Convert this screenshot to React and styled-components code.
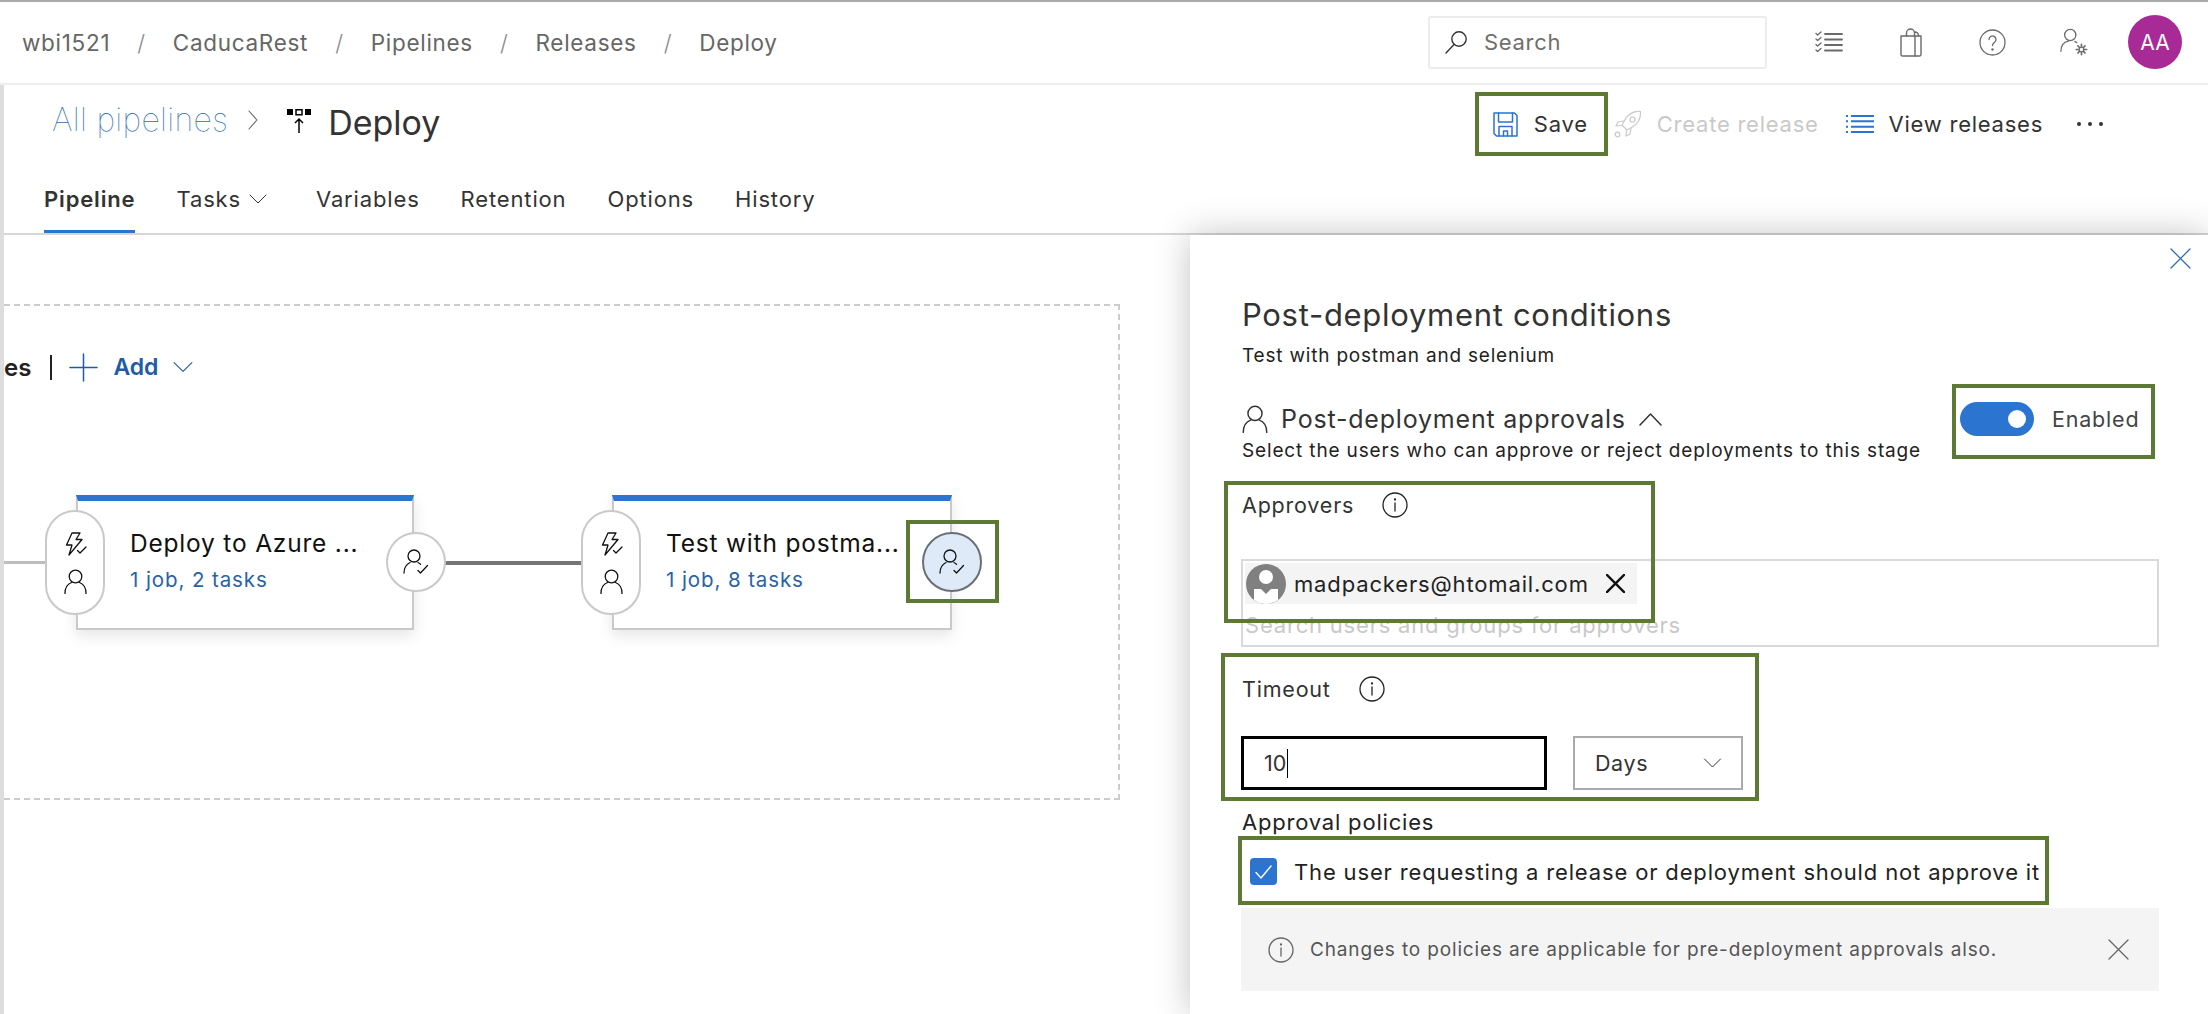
import React from 'react'
import styled, { createGlobalStyle } from 'styled-components'

const GlobalStyle = createGlobalStyle`
  html, body {
    margin: 0;
    padding: 0;
    background: #fff;
    font-family: Inter, "Noto Sans", "Liberation Sans", sans-serif;
  }
  * { box-sizing: border-box; }
`

const green = '#5c7a34'
const blue = '#2b74cf'

const Page = styled.div`
  width: 2208px;
  height: 1014px;
  overflow: hidden;
  background: #fff;
  border-top: 2px solid #a9a9a9;
`

const TopBar = styled.header`
  height: 83px;
  display: flex;
  align-items: center;
  padding: 0 26px 1px 22px;
  border-bottom: 2px solid #eeeeee;
`

const Crumbs = styled.nav`
  display: flex;
  align-items: center;
  gap: 27px;
  font-size: 22.5px;
  letter-spacing: 0.7px;
  color: #666;
`

const Slash = styled.span`
  color: #8a8a8a;
  font-weight: 300;
`

const SearchBox = styled.div`
  width: 339px;
  height: 53px;
  margin-left: auto;
  margin-right: 48px;
  display: flex;
  align-items: center;
  gap: 15px;
  padding-left: 13px;
  border: 2px solid #ececec;
  border-radius: 3px;
  color: #6f6f6f;
  font-size: 22px;
  letter-spacing: 0.7px;
`

const TopIcons = styled.div`
  display: flex;
  align-items: center;
  gap: 53.5px;
`

const TopIcon = styled.span`
  width: 28px;
  height: 28px;
  display: flex;
  align-items: center;
  justify-content: center;
  color: #6a6a6a;
`

const Avatar = styled.div`
  width: 54px;
  height: 54px;
  margin-left: 40.5px;
  border-radius: 50%;
  background: #a82a96;
  color: #fff;
  font-size: 21px;
  display: flex;
  align-items: center;
  justify-content: center;
`

const Body = styled.main`
  height: 929px;
  border-left: 4px solid #dddddd;
`

const TitleRow = styled.div`
  height: 84px;
  display: flex;
  justify-content: space-between;
  padding: 7px 105px 0 48px;
`

const TitleLeft = styled.div`
  display: flex;
  align-items: center;
  height: 56px;
`

const AllPipelines = styled.a`
  margin-bottom: 2px;
  font-size: 32px;
  font-weight: 100;
  letter-spacing: 0.3px;
  color: #2b6cb8;
`

const TitleChevron = styled.span`
  display: flex;
  margin: 0 28px 0 19px;
  color: #666;
`

const DeployMark = styled.span`
  display: flex;
  margin-top: 2px;
`

const DeployTitle = styled.h1`
  margin: 4px 0 0 17px;
  font-size: 34px;
  font-weight: 400;
  color: #333;
`

const Actions = styled.div`
  display: flex;
  align-items: flex-start;
`

const Action = styled.button`
  height: 64px;
  display: flex;
  align-items: center;
  gap: ${({ $gap }) => $gap || 15}px;
  padding: 0;
  margin-left: ${({ $left }) => $left || 0}px;
  background: none;
  border: none;
  font: inherit;
  font-size: 22px;
  letter-spacing: 0.75px;
  color: ${({ $disabled }) => ($disabled ? '#c9c9c9' : '#333')};
`

const SaveAction = styled(Action)`
  width: 133px;
  padding-left: 14px;
  border: 4px solid ${green};
`

const Dots = styled.span`
  display: flex;
  gap: 7px;
  margin-left: 34px;
  height: 64px;
  align-items: center;
`

const Dot = styled.i`
  width: 4px;
  height: 4px;
  border-radius: 50%;
  background: #333;
`

const TabBar = styled.div`
  height: 66px;
  display: flex;
  align-items: flex-end;
  gap: 41px;
  padding-left: 40px;
  border-bottom: 2px solid #d6d6d6;
`

const Tab = styled.div`
  height: 53px;
  display: flex;
  align-items: center;
  gap: 8px;
  padding-bottom: 13px;
  font-size: 22px;
  letter-spacing: 0.85px;
  font-weight: ${({ $active }) => ($active ? 600 : 400)};
  color: #333;
  border-bottom: 3px solid ${({ $active }) => ($active ? blue : 'transparent')};
  margin-right: ${({ $extra }) => $extra || 0}px;
`

const Content = styled.div`
  display: flex;
  height: 779px;
`

const CanvasArea = styled.section`
  width: 1186px;
  flex: none;
`

const DashedBox = styled.div`
  width: 1116px;
  height: 496px;
  margin-top: 69px;
  border: 2px dashed #cccccc;
  border-left: none;
`

const StageToolbar = styled.div`
  display: flex;
  align-items: center;
  height: 40px;
  margin-top: 41px;
  color: #1f5ca5;
`

const StagesLabel = styled.span`
  font-size: 24px;
  font-weight: 600;
  color: #222;
`

const Divider = styled.span`
  width: 2px;
  height: 25px;
  margin: 0 17px 0 19px;
  background: #222;
`

const AddLabel = styled.span`
  margin: 0 15px;
  font-size: 23px;
  font-weight: 600;
  color: #1f5ca5;
`

const StageRow = styled.div`
  display: flex;
  align-items: center;
  margin-top: 108px;
`

const Connector = styled.div`
  width: ${({ $width }) => $width}px;
  height: ${({ $light }) => ($light ? 3 : 4)}px;
  margin: ${({ $light }) => ($light ? '0 31px 0 0' : '0 31px')};
  background: ${({ $light }) => ($light ? '#bdbdbd' : '#757575')};
`

const StageCard = styled.div`
  position: relative;
  width: ${({ $width }) => $width}px;
  height: 135px;
  padding: 27px 0 0 52px;
  background: #fff;
  border: 2px solid #c9c9c9;
  border-top: 6px solid ${blue};
  box-shadow: 0 6px 14px rgba(0, 0, 0, 0.1);
`

const StageName = styled.div`
  font-size: 24.5px;
  letter-spacing: 0.8px;
  line-height: 30px;
  color: #111;
  white-space: nowrap;
`

const StageMeta = styled.div`
  margin-top: 9px;
  font-size: 20.5px;
  letter-spacing: 0.9px;
  line-height: 26px;
  color: #2a62a8;
`

const LeftPill = styled.div`
  position: absolute;
  left: -33px;
  top: 9px;
  width: 60px;
  height: 105px;
  border-radius: 30px;
  background: #fff;
  border: 2px solid #c9c9c9;
  display: flex;
  flex-direction: column;
  align-items: center;
  justify-content: center;
  gap: 13px;
  color: #111;
`

const RightCircle = styled.div`
  position: absolute;
  left: 308px;
  top: 31px;
  width: 60px;
  height: 60px;
  border-radius: 50%;
  background: ${({ $selected }) => ($selected ? '#deeaf7' : '#fff')};
  border: 2px solid ${({ $selected }) => ($selected ? '#6a6f76' : '#c9c9c9')};
  display: flex;
  align-items: center;
  justify-content: center;
  color: #111;
`

const NodeMark = styled.div`
  position: absolute;
  left: 292px;
  top: 19px;
  width: 93px;
  height: 83px;
  border: 4px solid ${green};
`

const Panel = styled.aside`
  position: relative;
  z-index: 1;
  flex: 1;
  height: 779px;
  padding: 60px 49px 0 51px;
  background: #fff;
  box-shadow: 0 0 34px rgba(0, 0, 0, 0.24);
`

const CloseButton = styled.span`
  position: absolute;
  top: 13px;
  right: 17px;
  display: flex;
  color: #2b6cb8;
`

const PanelTitle = styled.h2`
  margin: 0 0 0 1px;
  font-size: 31px;
  letter-spacing: 0.7px;
  line-height: 40px;
  font-weight: 400;
  color: #333;
`

const PanelSubtitle = styled.div`
  margin: 8px 0 0 1px;
  font-size: 19px;
  letter-spacing: 0.8px;
  line-height: 26px;
  color: #222;
`

const ApprovalsRow = styled.div`
  display: flex;
  justify-content: space-between;
  margin-top: 15px;
`

const ApprovalsText = styled.div`
  padding: 20px 0 0 1px;
`

const ApprovalsHeading = styled.div`
  display: flex;
  align-items: center;
  height: 30px;
  font-size: 25px;
  letter-spacing: 0.8px;
  color: #333;
`

const HeadingLabel = styled.span`
  margin: 0 13px;
`

const ApprovalsHint = styled.div`
  margin-top: 5px;
  font-size: 19px;
  letter-spacing: 0.85px;
  line-height: 24px;
  color: #222;
`

const ToggleBox = styled.div`
  width: 203px;
  height: 75px;
  margin-right: 4px;
  display: flex;
  align-items: flex-start;
  gap: 18px;
  padding: 14px 0 0 4px;
  border: 4px solid ${green};
  font-size: 21.5px;
  letter-spacing: 0.8px;
  color: #444;
`

const ToggleTrack = styled.span`
  width: 74px;
  height: 34px;
  flex: none;
  padding-left: 48px;
  display: flex;
  align-items: center;
  border-radius: 17px;
  background: ${blue};
`

const ToggleKnob = styled.i`
  width: 18px;
  height: 18px;
  border-radius: 50%;
  background: #fff;
`

const ToggleText = styled.span`
  line-height: 34px;
`

const ApproversField = styled.div`
  position: relative;
  margin-top: 28px;
`

const FieldLabel = styled.label`
  display: flex;
  align-items: center;
  height: 28px;
  margin-left: 1px;
  gap: ${({ $gap }) => $gap}px;
  font-size: 21.5px;
  letter-spacing: 0.8px;
  color: #333;
`

const PickerBox = styled.div`
  height: 88px;
  margin-top: 40px;
  padding: 2px;
  border: 2px solid #d9d9d9;
`

const Chip = styled.div`
  width: 392px;
  height: 41px;
  display: flex;
  align-items: center;
  padding-left: 1px;
  background: #f4f4f4;
  font-size: 22px;
  letter-spacing: 0.85px;
  color: #222;
`

const ChipAvatar = styled.span`
  display: flex;
  margin-right: 8px;
`

const ChipRemove = styled.span`
  display: flex;
  margin-left: 17px;
  color: #111;
`

const Placeholder = styled.div`
  margin-top: 9px;
  font-size: 22px;
  letter-spacing: 0.8px;
  line-height: 24px;
  color: #c9c9c9;
`

const ApproversMark = styled.div`
  position: absolute;
  left: -17px;
  top: -10px;
  width: 431px;
  height: 142px;
  border: 4px solid ${green};
  pointer-events: none;
`

const TimeoutBox = styled.div`
  width: 538px;
  height: 148px;
  margin: 6px 0 0 -20px;
  padding: 18px 0 0 16px;
  border: 4px solid ${green};
`

const TimeoutControls = styled.div`
  display: flex;
  gap: 26px;
  margin-top: 33px;
`

const TimeoutInput = styled.div`
  width: 306px;
  height: 54px;
  display: flex;
  align-items: center;
  padding-left: 20px;
  border: 3px solid #000;
  font-size: 21.5px;
  color: #333;
`

const Caret = styled.i`
  width: 1px;
  height: 29px;
  margin-left: 1px;
  background: #000;
`

const UnitSelect = styled.div`
  width: 170px;
  height: 54px;
  display: flex;
  align-items: center;
  justify-content: space-between;
  padding: 0 19px 0 20px;
  border: 2px solid #aaaaaa;
  font-size: 21.5px;
  letter-spacing: 0.6px;
  color: #333;
`

const PoliciesLabel = styled.div`
  margin: 7px 0 0 1px;
  font-size: 22px;
  letter-spacing: 0.8px;
  line-height: 28px;
  color: #222;
`

const PolicyBox = styled.div`
  width: 811px;
  height: 69px;
  margin-left: -3px;
  display: flex;
  align-items: center;
  gap: 17px;
  padding: 2px 0 0 8px;
  border: 4px solid ${green};
  font-size: 22px;
  letter-spacing: 0.85px;
  color: #222;
  white-space: nowrap;
`

const Checkbox = styled.span`
  width: 27px;
  height: 27px;
  flex: none;
  display: flex;
  align-items: center;
  justify-content: center;
  border-radius: 4px;
  background: ${blue};
  color: #fff;
`

const InfoBar = styled.div`
  height: 83px;
  margin-top: 3px;
  display: flex;
  align-items: center;
  gap: 16px;
  padding: 0 30px 0 27px;
  background: #f4f4f4;
  font-size: 19px;
  letter-spacing: 0.85px;
  color: #555;
`

const InfoClose = styled.span`
  display: flex;
  margin-left: auto;
  color: #666;
`

const Svg = ({ w, h = w, vb = '0 0 24 24', sw = 1.3, children }) => (
  <svg width={w} height={h} viewBox={vb} fill="none" stroke="currentColor" strokeWidth={sw} strokeLinecap="round" strokeLinejoin="round">
    {children}
  </svg>
)

const SearchIcon = () => (
  <Svg w={26} sw={1.4} vb="0 0 26 26">
    <circle cx="16" cy="10" r="7.2" color="#333" />
    <path d="M11 15.5 3 24" color="#333" />
  </Svg>
)

const ChecklistIcon = () => (
  <Svg w={28} h={22} vb="0 0 28 22" sw={1.3}>
    <path d="M10 3h17M10 8.5h17M10 14h17M10 19.5h17" strokeWidth="1.8" />
    <path d="M1 2.5l1.6 1.6L6 1M1 8l1.6 1.6L6 6.5M1 13.5l1.6 1.6L6 12M1 19l1.6 1.6L6 17.5" />
  </Svg>
)

const BagIcon = () => (
  <Svg w={24} h={29} vb="0 0 24 29" sw={1.4}>
    <path d="M2 8h20v18.5a1.5 1.5 0 0 1-1.5 1.5h-17A1.5 1.5 0 0 1 2 26.5z" />
    <path d="M7.5 8V5a4 4 0 0 1 8 0v3M16 8v20M15.5 4a3.5 3.5 0 0 1 4 3.5V8" />
  </Svg>
)

const HelpIcon = () => (
  <Svg w={27} vb="0 0 27 27" sw={1.3}>
    <circle cx="13.5" cy="13.5" r="12.5" />
    <path d="M10 10.5a3.5 3.5 0 1 1 5.6 2.8c-1.3 1-2.1 1.7-2.1 3.2" />
    <circle cx="13.5" cy="20.5" r=".6" fill="currentColor" />
  </Svg>
)

const UserGearIcon = () => (
  <Svg w={30} vb="0 0 30 30" sw={1.4}>
    <circle cx="11" cy="7.5" r="6" />
    <path d="M1 25c0-6 3-10 8-11M16 14.5c.8.3 1.5.7 2 1.2" />
    <circle cx="23" cy="23" r="2.5" />
    <path d="M23 17.5v2M23 26.5v2M17.5 23h2M26.5 23h2M19.2 19.2l1.4 1.4M25.4 25.4l1.4 1.4M19.2 26.8l1.4-1.4M25.4 20.6l1.4-1.4" strokeWidth="1.8" />
  </Svg>
)

const ChevronRight = () => (
  <Svg w={12} h={22} vb="0 0 12 22" sw={1.1}>
    <path d="M2 2l8 9-8 9" />
  </Svg>
)

const ChevronDown = ({ w = 18, h = 10 }) => (
  <Svg w={w} h={h} vb="0 0 18 10" sw={1}>
    <path d="M1 1l8 8 8-8" />
  </Svg>
)

const ChevronUp = () => (
  <Svg w={23} h={13} vb="0 0 23 13" sw={1.5}>
    <path d="M1 12 11.5 1 22 12" />
  </Svg>
)

const DeployIcon = () => (
  <svg width="24" height="24" viewBox="0 0 24 24" fill="none" stroke="#000">
    <rect x="0" y="0" width="6" height="6" fill="#000" stroke="none" />
    <rect x="9" y="0.75" width="6" height="5" strokeWidth="1.5" />
    <rect x="18" y="0" width="6" height="6" fill="#000" stroke="none" />
    <path d="M12 24V10M8 14l4-4 4 4" strokeWidth="1.5" />
  </svg>
)

const SaveIcon = () => (
  <Svg w={25} vb="0 0 25 25" sw={1.5}>
    <g color={blue}>
      <path d="M1 1h20.5L24 3.5V24H3.5L1 21.5z" />
      <path d="M5.5 1v9h14V1M6 24v-9.5h13V24M10.5 24v-5h4v5" />
    </g>
  </Svg>
)

const RocketIcon = () => (
  <Svg w={28} vb="0 0 28 28" sw={1.2}>
    <path d="M26.5 1.5c-7-.5-12.5 2.5-16 9L8 15l5 5 4.5-2.5c6.5-3.5 9.5-9 9-16z" />
    <circle cx="18.5" cy="9.5" r="2.5" />
    <path d="M9.5 11 4 12l-2 4 5.5-.5M17 18.5l-1 5.5-4 2 .5-5.5" />
    <circle cx="3.5" cy="24.5" r="2.3" />
  </Svg>
)

const ListIcon = () => (
  <svg width="28" height="18" viewBox="0 0 28 18" stroke={blue} fill="none" strokeWidth="2">
    <path d="M5 1h23M5 6.3h23M5 11.7h23M5 17h23" />
    <path d="M0 1h2M0 6.3h2M0 11.7h2M0 17h2" />
  </svg>
)

const PlusIcon = () => (
  <Svg w={29} vb="0 0 29 29" sw={1.5}>
    <path d="M14.5 1v27M1 14.5h27" color="#1f5ca5" />
  </Svg>
)

const BoltCheckIcon = () => (
  <Svg w={24} vb="0 0 24 24" sw={1.3}>
    <path d="M9 1h8l-4 6.5h6L6 23l3-10H3.5z" />
    <path d="M14.5 18.5l2.5 2.5 6-6" />
  </Svg>
)

const PersonIcon = ({ w = 23, h = 25 }) => (
  <Svg w={w} h={h} vb="0 0 23 25" sw={1.3}>
    <circle cx="11.5" cy="7.5" r="6.3" />
    <path d="M1 24.5c0-5.5 2.5-9.5 6.5-11M22 24.5c0-5.5-2.5-9.5-6.5-11" />
  </Svg>
)

const PersonCheckIcon = () => (
  <Svg w={26} vb="0 0 26 26" sw={1.3}>
    <circle cx="11" cy="7" r="6" />
    <path d="M1 24c0-5 2-8.5 6-10.5M15 13.5c1 .5 1.8 1 2.5 1.7" />
    <path d="M15 21.5l2.5 2.5 7-7.5" />
  </Svg>
)

const InfoIcon = ({ color = '#222' }) => (
  <Svg w={26} vb="0 0 26 26" sw={1.3}>
    <g color={color}>
      <circle cx="13" cy="13" r="12" />
      <path d="M13 11v8" />
      <circle cx="13" cy="7.5" r=".5" fill="currentColor" />
    </g>
  </Svg>
)

const CrossIcon = ({ w = 21, sw = 1.3 }) => (
  <Svg w={w} vb="0 0 21 21" sw={sw}>
    <path d="M1 1l19 19M20 1 1 20" />
  </Svg>
)

const UserAvatarIcon = () => (
  <svg width="40" height="40" viewBox="0 0 40 40">
    <circle cx="20" cy="20" r="20" fill="#808080" />
    <circle cx="20" cy="13" r="7" fill="#fff" />
    <path d="M8 25h24v11a20 20 0 0 1-24 0z" fill="#fff" />
    <path d="M15 25l5 5 5-5z" fill="#808080" />
  </svg>
)

const CheckIcon = () => (
  <Svg w={17} h={14} vb="0 0 17 14" sw={1.4}>
    <path d="M1 7.5 6 13 16 1" />
  </Svg>
)

const crumbs = ['wbi1521', 'CaducaRest', 'Pipelines', 'Releases', 'Deploy']
const tabs = ['Pipeline', 'Tasks', 'Variables', 'Retention', 'Options', 'History']

const Stage = ({ name, meta, width, selected }) => (
  <StageCard $width={width}>
    <LeftPill>
      <BoltCheckIcon />
      <PersonIcon />
    </LeftPill>
    <StageName>{name}</StageName>
    <StageMeta>{meta}</StageMeta>
    <RightCircle $selected={selected}>
      <PersonCheckIcon />
    </RightCircle>
    {selected && <NodeMark />}
  </StageCard>
)

export default function App() {
  return (
    <Page>
      <GlobalStyle />
      <TopBar>
        <Crumbs>
          {crumbs.map((crumb, index) => (
            <React.Fragment key={crumb}>
              {index > 0 && <Slash>/</Slash>}
              <span>{crumb}</span>
            </React.Fragment>
          ))}
        </Crumbs>
        <SearchBox>
          <SearchIcon />
          Search
        </SearchBox>
        <TopIcons>
          <TopIcon><ChecklistIcon /></TopIcon>
          <TopIcon><BagIcon /></TopIcon>
          <TopIcon><HelpIcon /></TopIcon>
          <TopIcon><UserGearIcon /></TopIcon>
        </TopIcons>
        <Avatar>AA</Avatar>
      </TopBar>
      <Body>
        <TitleRow>
          <TitleLeft>
            <AllPipelines>All pipelines</AllPipelines>
            <TitleChevron><ChevronRight /></TitleChevron>
            <DeployMark><DeployIcon /></DeployMark>
            <DeployTitle>Deploy</DeployTitle>
          </TitleLeft>
          <Actions>
            <SaveAction $gap={16}><SaveIcon />Save</SaveAction>
            <Action $disabled $left={6}><RocketIcon />Create release</Action>
            <Action $left={27}><ListIcon />View releases</Action>
            <Dots><Dot /><Dot /><Dot /></Dots>
          </Actions>
        </TitleRow>
        <TabBar>
          {tabs.map((tab, index) => (
            <Tab key={tab} $active={index === 0} $extra={tab === 'Tasks' ? 8 : 0}>
              {tab}
              {tab === 'Tasks' && <ChevronDown />}
            </Tab>
          ))}
        </TabBar>
        <Content>
          <CanvasArea>
            <DashedBox>
              <StageToolbar>
                <StagesLabel>es</StagesLabel>
                <Divider />
                <PlusIcon />
                <AddLabel>Add</AddLabel>
                <ChevronDown w={20} h={12} />
              </StageToolbar>
              <StageRow>
                <Connector $light $width={41} />
                <Stage name="Deploy to Azure ..." meta="1 job, 2 tasks" width={338} />
                <Connector $width={136} />
                <Stage name="Test with postma..." meta="1 job, 8 tasks" width={340} selected />
              </StageRow>
            </DashedBox>
          </CanvasArea>
          <Panel>
            <CloseButton><CrossIcon /></CloseButton>
            <PanelTitle>Post-deployment conditions</PanelTitle>
            <PanelSubtitle>Test with postman and selenium</PanelSubtitle>
            <ApprovalsRow>
              <ApprovalsText>
                <ApprovalsHeading>
                  <PersonIcon w={26} h={28} />
                  <HeadingLabel>Post-deployment approvals</HeadingLabel>
                  <ChevronUp />
                </ApprovalsHeading>
                <ApprovalsHint>Select the users who can approve or reject deployments to this stage</ApprovalsHint>
              </ApprovalsText>
              <ToggleBox>
                <ToggleTrack><ToggleKnob /></ToggleTrack>
                <ToggleText>Enabled</ToggleText>
              </ToggleBox>
            </ApprovalsRow>
            <ApproversField>
              <FieldLabel $gap={28}>Approvers <InfoIcon /></FieldLabel>
              <PickerBox>
                <Chip>
                  <ChipAvatar><UserAvatarIcon /></ChipAvatar>
                  madpackers@htomail.com
                  <ChipRemove><CrossIcon w={19} sw={2.6} /></ChipRemove>
                </Chip>
                <Placeholder>Search users and groups for approvers</Placeholder>
              </PickerBox>
              <ApproversMark />
            </ApproversField>
            <TimeoutBox>
              <FieldLabel $gap={28}>Timeout <InfoIcon /></FieldLabel>
              <TimeoutControls>
                <TimeoutInput>10<Caret /></TimeoutInput>
                <UnitSelect>Days <ChevronDown w={19} h={10} /></UnitSelect>
              </TimeoutControls>
            </TimeoutBox>
            <PoliciesLabel>Approval policies</PoliciesLabel>
            <PolicyBox>
              <Checkbox><CheckIcon /></Checkbox>
              The user requesting a release or deployment should not approve it
            </PolicyBox>
            <InfoBar>
              <InfoIcon color="#666" />
              Changes to policies are applicable for pre-deployment approvals also.
              <InfoClose><CrossIcon /></InfoClose>
            </InfoBar>
          </Panel>
        </Content>
      </Body>
    </Page>
  )
}
